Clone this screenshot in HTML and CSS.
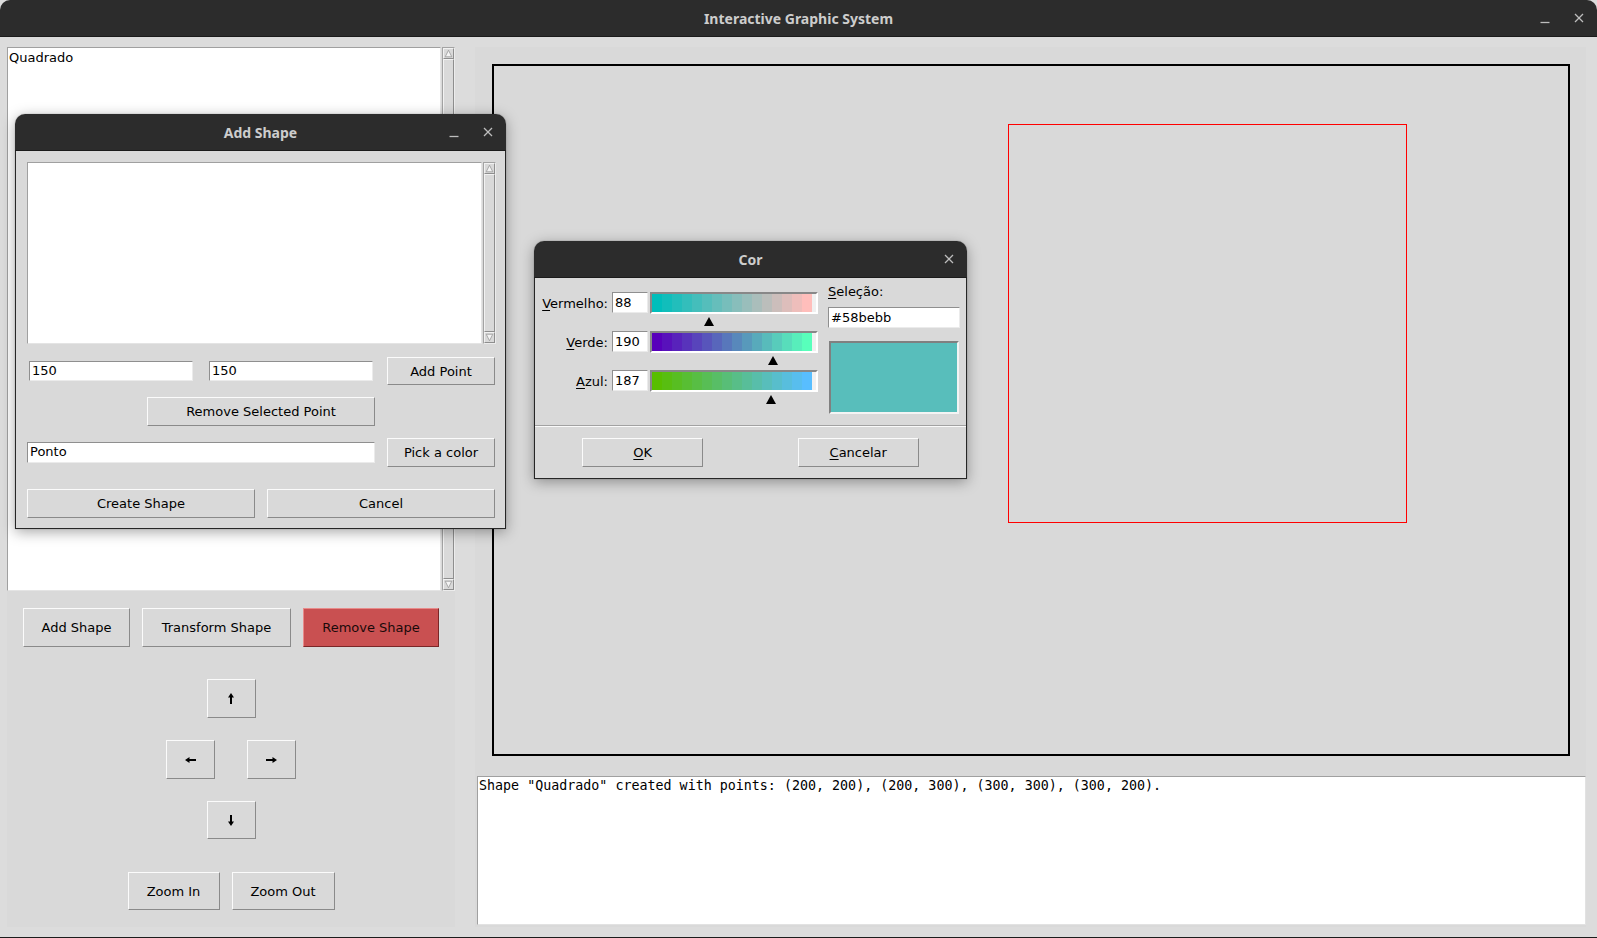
FILE: index.html
```html
<!DOCTYPE html>
<html>
<head>
<meta charset="utf-8">
<title>Interactive Graphic System</title>
<link rel="stylesheet" href="styles.css">
</head>
<body>
<div class="app">
  <header class="titlebar">
    <span></span>
    <span class="wtitle">Interactive Graphic System</span>
    <div class="wctl">
      <svg class="ico-min" width="10" height="10" viewBox="0 0 10 10"><line x1="0.5" y1="8.5" x2="9.5" y2="8.5"/></svg>
      <svg class="ico-close" width="10" height="10" viewBox="0 0 10 10"><line x1="1" y1="1" x2="9" y2="9"/><line x1="9" y1="1" x2="1" y2="9"/></svg>
    </div>
  </header>

  <main class="main">
    <section class="left">
      <div class="listwrap main-list">
        <div class="listbox"><div class="item">Quadrado</div></div>
        <div class="vscroll">
          <div class="sarrow"><svg width="11" height="11" viewBox="0 0 11 11"><polygon points="5.5,1.5 9.5,9.5 1.5,9.5"/></svg></div>
          <div class="sthumb"></div>
          <div class="sarrow"><svg width="11" height="11" viewBox="0 0 11 11"><polygon points="1.5,1.5 9.5,1.5 5.5,9.5"/></svg></div>
        </div>
      </div>
      <div class="btnrow">
        <div class="btn b-add">Add Shape</div>
        <div class="btn b-trans">Transform Shape</div>
        <div class="btn b-remove">Remove Shape</div>
      </div>
      <div class="btn b-arrow b-up"><svg width="6" height="11" viewBox="0 0 6 11"><path d="M3 0 L6 4.5 L4 4.5 L4 11 L2 11 L2 4.5 L0 4.5 Z"/></svg></div>
      <div class="lrrow">
        <div class="btn b-arrow"><svg width="11" height="6" viewBox="0 0 11 6"><path d="M0 3 L4.5 0 L4.5 2 L11 2 L11 4 L4.5 4 L4.5 6 Z"/></svg></div>
        <div class="btn b-arrow"><svg width="11" height="6" viewBox="0 0 11 6"><path d="M11 3 L6.5 0 L6.5 2 L0 2 L0 4 L6.5 4 L6.5 6 Z"/></svg></div>
      </div>
      <div class="btn b-arrow b-down"><svg width="6" height="11" viewBox="0 0 6 11"><path d="M3 11 L6 6.5 L4 6.5 L4 0 L2 0 L2 6.5 L0 6.5 Z"/></svg></div>
      <div class="zoomrow">
        <div class="btn b-zin">Zoom In</div>
        <div class="btn b-zout">Zoom Out</div>
      </div>
    </section>

    <section class="right">
      <div class="canvas">
        <div class="shape" style="left:514px; top:58px; width:399px; height:399px;"></div>
      </div>
      <div class="log">Shape "Quadrado" created with points: (200, 200), (200, 300), (300, 300), (300, 200).</div>
    </section>
  </main>

  <div class="dlg dlg-add">
    <div class="dtitle">
      <span></span>
      <span class="dname">Add Shape</span>
      <div class="wctl">
        <svg class="ico-min" width="10" height="10" viewBox="0 0 10 10"><line x1="0.5" y1="8.5" x2="9.5" y2="8.5"/></svg>
        <svg class="ico-close" width="10" height="10" viewBox="0 0 10 10"><line x1="1" y1="1" x2="9" y2="9"/><line x1="9" y1="1" x2="1" y2="9"/></svg>
      </div>
    </div>
    <div class="dbody">
      <div class="listwrap add-list">
        <div class="listbox"></div>
        <div class="vscroll">
          <div class="sarrow"><svg width="11" height="11" viewBox="0 0 11 11"><polygon points="5.5,1.5 9.5,9.5 1.5,9.5"/></svg></div>
          <div class="sthumb"></div>
          <div class="sarrow"><svg width="11" height="11" viewBox="0 0 11 11"><polygon points="1.5,1.5 9.5,1.5 5.5,9.5"/></svg></div>
        </div>
      </div>
      <div class="arow r1">
        <div class="entry e-x">150</div>
        <div class="entry e-y">150</div>
        <div class="btn b-side">Add Point</div>
      </div>
      <div class="arow r2">
        <div class="btn b-rsp">Remove Selected Point</div>
      </div>
      <div class="arow r3">
        <div class="entry e-name">Ponto</div>
        <div class="btn b-side">Pick a color</div>
      </div>
      <div class="arow r4">
        <div class="btn b-half">Create Shape</div>
        <div class="btn b-half">Cancel</div>
      </div>
    </div>
  </div>

  <div class="dlg dlg-cor">
    <div class="dtitle">
      <span></span>
      <span class="dname">Cor</span>
      <div class="wctl">
        <svg class="ico-close" width="10" height="10" viewBox="0 0 10 10"><line x1="1" y1="1" x2="9" y2="9"/><line x1="9" y1="1" x2="1" y2="9"/></svg>
      </div>
    </div>
    <div class="cbody">
      <div class="cmain">
        <div class="sliders">
          <div class="srow">
            <span class="slab"><u>V</u>ermelho:</span>
            <div class="entry cent">88</div>
            <div class="slider"><div class="bands g-red"></div><span class="tri" style="left:53.7px"></span></div>
          </div>
          <div class="srow">
            <span class="slab"><u>V</u>erde:</span>
            <div class="entry cent">190</div>
            <div class="slider"><div class="bands g-green"></div><span class="tri" style="left:117.7px"></span></div>
          </div>
          <div class="srow">
            <span class="slab"><u>A</u>zul:</span>
            <div class="entry cent">187</div>
            <div class="slider"><div class="bands g-blue"></div><span class="tri" style="left:115.8px"></span></div>
          </div>
        </div>
        <div class="selcol">
          <div class="sellab"><u>S</u>eleção:</div>
          <div class="entry selent">#58bebb</div>
          <div class="swatch" style="background:#58bebb"></div>
        </div>
      </div>
      <div class="csep"></div>
      <div class="cbtns">
        <div class="btn cbtn"><u>O</u>K</div>
        <div class="btn cbtn"><u>C</u>ancelar</div>
      </div>
    </div>
  </div>
</div>
</body>
</html>
```

FILE: styles.css
```css
* { box-sizing: border-box; }
html, body { margin: 0; padding: 0; }
body {
  width: 1597px;
  height: 938px;
  overflow: hidden;
  background: #dcdcdc;
  font-family: "DejaVu Sans", sans-serif;
  font-size: 13px;
  color: #000;
}
.app {
  position: relative;
  width: 1597px;
  height: 938px;
  display: flex;
  flex-direction: column;
  border-bottom: 1px solid #1c1c1c;
}

/* window chrome */
.titlebar, .dtitle {
  flex: none;
  height: 37px;
  background: #2c2c2c;
  border-bottom: 1px solid #1b1b1b;
  display: grid;
  grid-template-columns: 1fr auto 1fr;
  align-items: center;
}
.titlebar { border-radius: 10px 10px 0 0; }
.wtitle, .dname {
  font-family: "Noto Sans", "DejaVu Sans", sans-serif;
  font-weight: 700;
  font-size: 14px;
  color: #cdcdcd;
}
.wctl {
  justify-self: end;
  display: flex;
  align-items: center;
  gap: 24px;
  padding-right: 13px;
}
.wctl svg { display: block; }
.wctl line { stroke: #bdbdbd; stroke-width: 1.3; }
.ico-min { margin-top: 2px; }

/* main area */
.main {
  flex: 1;
  display: flex;
  gap: 20px;
  padding: 10px 11px 10px 7px;
}
.left {
  width: 448px;
  background: #d9d9d9;
  display: flex;
  flex-direction: column;
  align-items: center;
}
.right {
  width: 1111px;
  background: #d9d9d9;
  display: flex;
  flex-direction: column;
  padding-top: 17px;
}

/* list + scrollbar */
.listwrap { display: flex; gap: 1px; align-self: stretch; }
.main-list { height: 544px; }
.listbox {
  flex: 1;
  background: #fff;
  border: 1px solid;
  border-color: #a0a0a0 #e4e4e4 #e4e4e4 #a0a0a0;
  padding: 0 1px;
}
.item { line-height: 16px; padding-top: 2px; }
.vscroll {
  width: 13px;
  display: flex;
  flex-direction: column;
  background: #d9d9d9;
  border: 1px solid;
  border-color: #a3a3a3 #ececec #ececec #a3a3a3;
}
.sarrow {
  height: 11px;
  flex: none;
  border: 1px solid;
  border-color: #f2f2f2 #8e8e8e #8e8e8e #f2f2f2;
  display: flex;
  align-items: center;
  justify-content: center;
}
.sarrow svg { display: block; width: 9px; height: 9px; }
.sarrow polygon { fill: #f4f4f4; stroke: #9a9a9a; stroke-width: 1; }
.sthumb {
  flex: 1;
  border: 1px solid;
  border-color: #f2f2f2 #8e8e8e #8e8e8e #f2f2f2;
  background: #d9d9d9;
}

/* buttons */
.btn {
  display: flex;
  align-items: center;
  justify-content: center;
  background: #d9d9d9;
  border: 1px solid;
  border-color: #fbfbfb #8a8a8a #8a8a8a #fbfbfb;
  white-space: nowrap;
  color: #000;
}
.btnrow { display: flex; gap: 12px; margin-top: 17px; }
.btnrow .btn { height: 39px; }
.b-add { width: 107px; }
.b-trans { width: 149px; }
.b-remove {
  width: 136px;
  background: #c95051;
  border-color: #e88a8a #7a2627 #7a2627 #e88a8a;
  color: #1a0a0a;
}
.b-arrow { width: 49px; height: 39px; }
.b-arrow path { fill: #000; }
.b-up { margin-top: 32px; }
.lrrow { display: flex; gap: 32px; margin-top: 22px; }
.b-down { margin-top: 22px; height: 38px; }
.zoomrow { display: flex; gap: 12px; margin-top: 33px; }
.zoomrow .btn { height: 38px; }
.b-zin { width: 92px; }
.b-zout { width: 103px; }

/* canvas */
.canvas {
  position: relative;
  height: 692px;
  margin: 0 16px 0 17px;
  border: 2px solid #000;
  background: #d9d9d9;
}
.shape {
  position: absolute;
  border: 1px solid #ff0000;
}
.log {
  margin: 20px 0 0 2px;
  height: 149px;
  background: #fff;
  border: 1px solid;
  border-color: #a0a0a0 #e2e2e2 #e2e2e2 #a0a0a0;
  padding: 0 1px;
  font-family: "DejaVu Sans Mono", monospace;
  font-size: 13.33px;
  line-height: 17px;
  white-space: pre;
}

/* dialogs */
.dlg {
  position: absolute;
  display: flex;
  flex-direction: column;
  border-radius: 10px 10px 0 0;
  box-shadow: 0 3px 14px rgba(0, 0, 0, 0.35), 0 0 1px rgba(0, 0, 0, 0.5);
}
.dlg-add { left: 15px; top: 114px; width: 491px; height: 415px; }
.dlg-cor { left: 534px; top: 241px; width: 433px; height: 238px; }
.dtitle { border-radius: 10px 10px 0 0; }

.dbody {
  flex: 1;
  background: #d9d9d9;
  border: 1px solid #262626;
  border-top: none;
  padding: 11px 10px 0 11px;
}
.add-list { height: 182px; margin-right: -1px; }
.arow { display: flex; align-items: center; }
.r1 { margin-top: 13px; height: 28px; }
.r2 { margin-top: 12px; height: 29px; }
.r3 { margin-top: 12px; height: 29px; }
.r4 { margin-top: 22px; height: 29px; }
.entry {
  background: #fff;
  border: 1px solid;
  border-color: #8f8f8f #ebebeb #ebebeb #8f8f8f;
  padding: 0 2px;
  line-height: 18px;
  height: 21px;
}
.e-x { width: 164px; margin-left: 2px; height: 20px; }
.e-y { width: 164px; margin-left: 16px; height: 20px; }
.r1 .b-side { margin-left: 14px; height: 28px; }
.b-side { width: 108px; height: 29px; }
.b-rsp { width: 228px; height: 29px; margin-left: 120px; }
.e-name { width: 348px; }
.r3 .b-side { margin-left: 12px; }
.r4 { gap: 12px; }
.b-half { width: 228px; height: 29px; }

/* color chooser */
.cbody {
  flex: 1;
  background: #d9d9d9;
  border: 1px solid #262626;
  border-top: none;
  display: flex;
  flex-direction: column;
}
.cmain { height: 147px; display: flex; align-items: flex-start; }
.sliders { padding: 14px 0 0 6px; }
.srow { display: flex; align-items: flex-start; height: 39px; }
.slab { width: 67px; text-align: right; line-height: 22px; padding-top: 1px; white-space: nowrap; }
.cent { width: 36px; margin-left: 4px; height: 21px; padding: 1px 2px 0; }
.slider {
  position: relative;
  width: 168px;
  height: 22px;
  margin-left: 2px;
  border: 2px solid;
  border-color: #888 #fff #fff #888;
}
.bands { width: 100%; height: 100%; }
.g-red {
  background: linear-gradient(to right,
    rgb(0,190,187) 0 10px, rgb(17,190,187) 10px 20px, rgb(34,190,187) 20px 30px, rgb(51,190,187) 30px 40px,
    rgb(68,190,187) 40px 50px, rgb(85,190,187) 50px 60px, rgb(102,190,187) 60px 70px, rgb(119,190,187) 70px 80px,
    rgb(136,190,187) 80px 90px, rgb(153,190,187) 90px 100px, rgb(170,190,187) 100px 110px, rgb(187,190,187) 110px 120px,
    rgb(204,190,187) 120px 130px, rgb(221,190,187) 130px 140px, rgb(238,190,187) 140px 150px, rgb(255,190,187) 150px 160px,
    #f0f0f0 160px);
}
.g-green {
  background: linear-gradient(to right,
    rgb(88,0,187) 0 10px, rgb(88,17,187) 10px 20px, rgb(88,34,187) 20px 30px, rgb(88,51,187) 30px 40px,
    rgb(88,68,187) 40px 50px, rgb(88,85,187) 50px 60px, rgb(88,102,187) 60px 70px, rgb(88,119,187) 70px 80px,
    rgb(88,136,187) 80px 90px, rgb(88,153,187) 90px 100px, rgb(88,170,187) 100px 110px, rgb(88,187,187) 110px 120px,
    rgb(88,204,187) 120px 130px, rgb(88,221,187) 130px 140px, rgb(88,238,187) 140px 150px, rgb(88,255,187) 150px 160px,
    #f0f0f0 160px);
}
.g-blue {
  background: linear-gradient(to right,
    rgb(88,190,0) 0 10px, rgb(88,190,17) 10px 20px, rgb(88,190,34) 20px 30px, rgb(88,190,51) 30px 40px,
    rgb(88,190,68) 40px 50px, rgb(88,190,85) 50px 60px, rgb(88,190,102) 60px 70px, rgb(88,190,119) 70px 80px,
    rgb(88,190,136) 80px 90px, rgb(88,190,153) 90px 100px, rgb(88,190,170) 100px 110px, rgb(88,190,187) 110px 120px,
    rgb(88,190,204) 120px 130px, rgb(88,190,221) 130px 140px, rgb(88,190,238) 140px 150px, rgb(88,190,255) 150px 160px,
    #f0f0f0 160px);
}
.tri {
  position: absolute;
  top: 23px;
  width: 0;
  height: 0;
  margin-left: -2px;
  border-left: 5.5px solid transparent;
  border-right: 5.5px solid transparent;
  border-bottom: 9px solid #000;
}
.selcol { width: 132px; margin-left: 10px; padding-top: 6px; }
.sellab { line-height: 16px; }
.selent { margin-top: 7px; height: 21px; width: 132px; padding-top: 1px; }
.swatch {
  margin: 13px 0 0 1px;
  width: 130px;
  height: 73px;
  border: 2px solid;
  border-color: #808080 #f4f4f4 #f4f4f4 #808080;
}
.csep { height: 2px; border-top: 1px solid #a2a2a2; border-bottom: 1px solid #fafafa; }
.cbtns { display: flex; justify-content: space-around; padding-top: 11px; }
.cbtn { width: 121px; height: 29px; }
u { text-decoration-thickness: 1px; text-underline-offset: 2px; }
```
